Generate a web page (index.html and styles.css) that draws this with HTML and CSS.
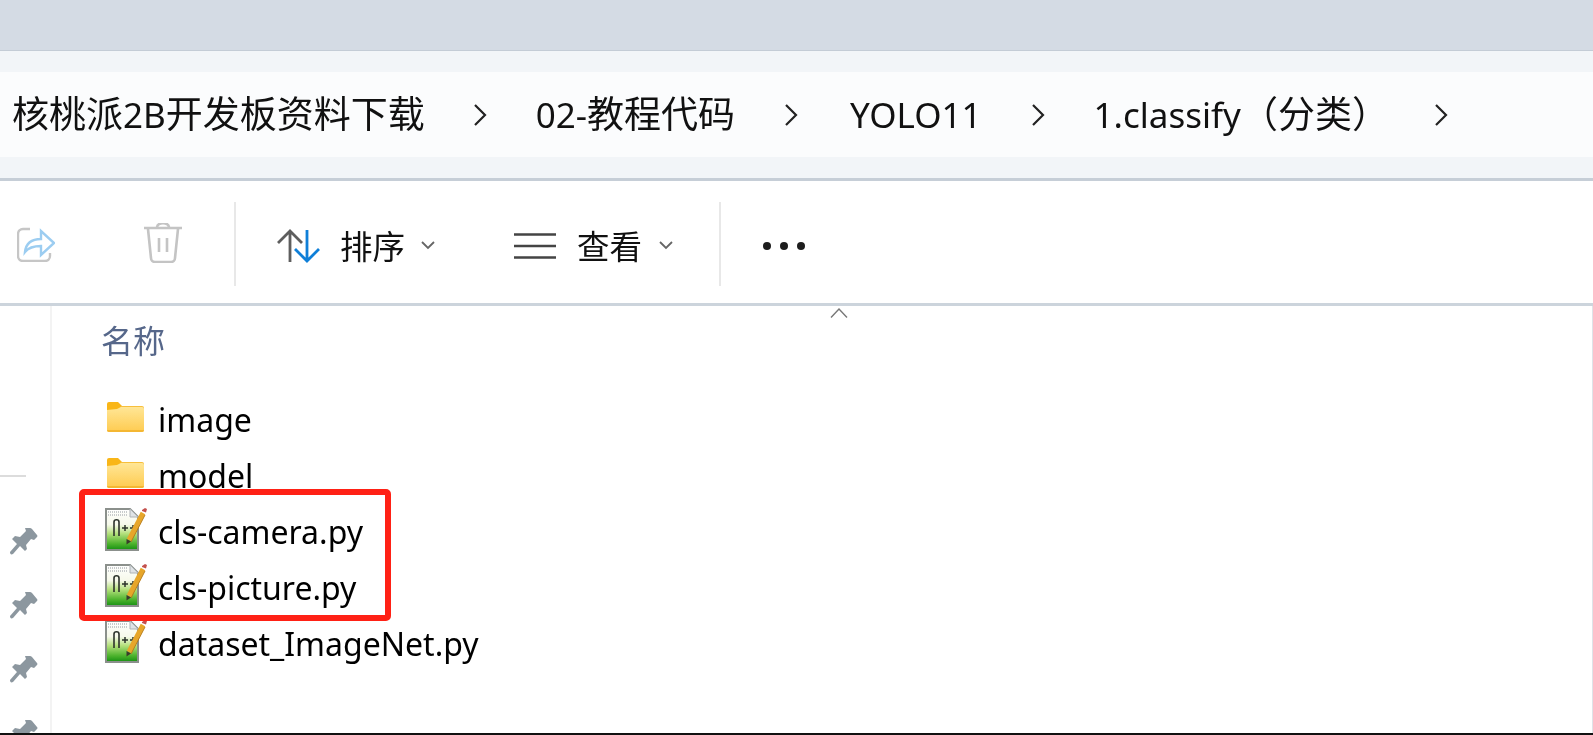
FILE: index.html
```html
<!DOCTYPE html>
<html lang="zh-CN">
<head>
<meta charset="utf-8">
<title>1.classify（分类）</title>
<link rel="stylesheet" href="styles.css">
</head>
<body>
<div class="window">
  <div class="titlebar"></div>
  <div class="address">
    <nav class="crumbs">
      <span class="crumb c1">核桃派<span class="lat">2B</span>开发板资料下载</span>
      <svg class="sep-chev" viewBox="0 0 14 22"><path d="M2 1l10 10L2 21"/></svg>
      <span class="crumb c2"><span class="lat">02-</span>教程代码</span>
      <svg class="sep-chev" viewBox="0 0 14 22"><path d="M2 1l10 10L2 21"/></svg>
      <span class="crumb c3"><span class="lat">YOLO11</span></span>
      <svg class="sep-chev" viewBox="0 0 14 22"><path d="M2 1l10 10L2 21"/></svg>
      <span class="crumb c4"><span class="lat">1.classify</span>（分类）</span>
      <svg class="sep-chev last" viewBox="0 0 14 22"><path d="M2 1l10 10L2 21"/></svg>
    </nav>
  </div>
  <div class="toolbar">
    <svg class="ic-share" viewBox="0 0 38 36">
      <path class="grey" d="M13 3H6a5 5 0 0 0-5 5v22a5 5 0 0 0 5 5h22a5 5 0 0 0 5-5v-3"/>
      <path class="blue" d="M8 26c1-9 7-13 16-13V5l13 12-13 12v-9c-7 0-12 1-16 6z"/>
    </svg>
    <svg class="ic-trash" viewBox="0 0 40 40">
      <path d="M1 5h38M14 4c1-5 11-5 12 0M5 6l3 29a4 4 0 0 0 4 4h16a4 4 0 0 0 4-4l3-29M16 15v14M24 15v14"/>
    </svg>
    <span class="divider first"></span>
    <div class="tool sort">
      <svg class="ic-sort" viewBox="0 0 43 34">
        <path class="dark" d="M13 33V2M1 14L13 2l12 12"/>
        <path class="accent" d="M30 1v31M18 20l12 12 12-12"/>
      </svg>
      <span class="tool-label">排序</span>
      <svg class="ic-down" viewBox="0 0 14 9"><path d="M1 1l6 6 6-6"/></svg>
    </div>
    <div class="tool view">
      <svg class="ic-view" viewBox="0 0 42 26">
        <path d="M0 1.500h42M0 13h42M0 24.500h42"/>
      </svg>
      <span class="tool-label">查看</span>
      <svg class="ic-down" viewBox="0 0 14 9"><path d="M1 1l6 6 6-6"/></svg>
    </div>
    <span class="divider second"></span>
    <div class="dots"><i></i><i></i><i></i></div>
  </div>
  <div class="content">
    <aside class="side">
      <hr class="side-rule">
      <svg class="pin" viewBox="0 0 28 28"><use href="#pin"/></svg>
      <svg class="pin" viewBox="0 0 28 28"><use href="#pin"/></svg>
      <svg class="pin" viewBox="0 0 28 28"><use href="#pin"/></svg>
      <svg class="pin" viewBox="0 0 28 28"><use href="#pin"/></svg>
    </aside>
    <main class="list">
      <svg class="sort-caret" viewBox="0 0 18 10"><path d="M1 9.500L9 1l8 8.500"/></svg>
      <div class="col-head">名称</div>
      <div class="row">
        <svg class="ic-folder" viewBox="0 0 37 30"><use href="#folder"/></svg>
        <span class="name">image</span>
      </div>
      <div class="row">
        <svg class="ic-folder" viewBox="0 0 37 30"><use href="#folder"/></svg>
        <span class="name">model</span>
      </div>
      <div class="row">
        <svg class="ic-npp" viewBox="0 0 42 44"><use href="#npp"/></svg>
        <span class="name">cls-camera.py</span>
      </div>
      <div class="row">
        <svg class="ic-npp" viewBox="0 0 42 44"><use href="#npp"/></svg>
        <span class="name">cls-picture.py</span>
      </div>
      <div class="row">
        <svg class="ic-npp" viewBox="0 0 42 44"><use href="#npp"/></svg>
        <span class="name">dataset_ImageNet.py</span>
      </div>
      <div class="highlight"></div>
    </main>
  </div>
</div>
<svg class="defs" aria-hidden="true">
  <defs>
    <linearGradient id="fb" x1="0" y1="0" x2="0" y2="1">
      <stop offset="0" stop-color="#ffe696"/><stop offset="1" stop-color="#fecb50"/>
    </linearGradient>
    <linearGradient id="pg" x1="0" y1="0" x2="0" y2="1">
      <stop offset="0" stop-color="#ffffff"/><stop offset=".38" stop-color="#f6f9ea"/>
      <stop offset=".6" stop-color="#b4e07c"/><stop offset=".85" stop-color="#4cb22c"/><stop offset="1" stop-color="#158f12"/>
    </linearGradient>
    <path id="pin" d="M20 1q1 0 2 1l5 6q1 1 0 2l-3 3-3-1-5 6 1 4-2 2-5-5-7 8c-2 1-3 0-3-2l7-8-5-5 3-3 5 1 6-6-1-3z"/>
    <g id="folder">
      <path fill="#f9b618" d="M0 2a2 2 0 0 1 2-2h9l4 4v6H0z"/>
      <path fill="#f7bf3c" d="M14 4h21a2 2 0 0 1 2 2v3H10z"/>
      <path fill="url(#fb)" d="M0 8l10-1 4-2h21a2 2 0 0 1 2 2v21a2 2 0 0 1-2 2H2a2 2 0 0 1-2-2z"/>
      <path fill="#f4b733" d="M0 28h37a2 2 0 0 1-2 2H2a2 2 0 0 1-2-2z"/>
    </g>
    <g id="npp">
      <path fill="url(#pg)" stroke="#8b908c" stroke-width="2" d="M1 2h24l8 8v33H1z"/>
      <path fill="#dfe3e6" stroke="#aeb3b6" d="M25 2v8h8z"/>
      <path stroke="#b6babd" stroke-width="1.500" stroke-dasharray="1 1" d="M3 5h20M3 8h20"/>
      <path fill="none" stroke="#2c332c" stroke-width="1.600" d="M9 29V15c0-3 5-3 5 0v14"/>
      <path fill="none" stroke="#2c332c" stroke-width="1.500" d="M17 21h6M20 18v6M25 21h6M28 18v6"/>
      <path fill="none" stroke="#e7a62a" stroke-width="5" d="M38 6L24 33"/>
      <path fill="none" stroke="#b97d17" stroke-width="1" d="M40 8L26 35"/>
      <path fill="#c3504d" d="M37 3l3-2 2 1-1 3.500-4-1.500z"/>
      <path fill="#3b3b2b" d="M21.500 32l4.500 2.500-4.500 3z"/>
    </g>
  </defs>
</svg>
</body>
</html>
```
FILE: styles.css
```css
* { box-sizing: border-box; }
html, body { margin: 0; padding: 0; background: #fff; }
body { width: 1593px; height: 735px; overflow: hidden; font-family: "Noto Sans", "Noto Sans CJK SC", sans-serif; }
.defs { width: 0; height: 0; position: absolute; }
.window { width: 1593px; height: 735px; display: flex; flex-direction: column; }

.titlebar { height: 51px; background: #d4dbe4; border-bottom: 1px solid #c4ccd6; flex: none; }

.address { height: 130px; flex: none; padding-top: 21px; background: #f2f5f8; border-bottom: 3px solid #c6ced7; }
.crumbs { height: 85px; background: #fbfcfd; display: flex; align-items: center; padding-left: 12px; filter: blur(.45px); }
.crumb { font-size: 37px; line-height: 46px; color: #111; white-space: nowrap; }
.lat { font-size: 35px; }
.sep-chev { width: 14px; height: 22px; flex: none; }
.sep-chev path { fill: none; stroke: #222; stroke-width: 2.200; }
.c1 { margin-right: 48px; }
.c2 { margin-left: 49px; margin-right: 49px; }
.c3 { margin-left: 52px; margin-right: 49px; }
.c4 { margin-left: 49px; margin-right: 45px; }

.toolbar { height: 125px; flex: none; display: flex; align-items: center; padding: 10px 0 3px 17px; border-bottom: 3px solid #ccd4dc; background: #fff; }
.ic-share { width: 38px; height: 36px; flex: none; margin-top: -4px; filter: blur(.45px); }
.ic-share path { fill: none; stroke-width: 2.400; }
.ic-share .grey { stroke: #c6c6c6; }
.ic-share .blue { stroke: #9ccdf1; }
.ic-trash { width: 40px; height: 40px; flex: none; margin-left: 88px; margin-top: -6px; filter: blur(.45px); }
.ic-trash path { fill: none; stroke: #c4c4c4; stroke-width: 2.600; }
.divider { width: 2px; height: 84px; background: #e8e8e8; flex: none; margin-top: -4px; }
.divider.first { margin-left: 51px; }
.divider.second { margin-left: 46px; }
.tool { display: flex; align-items: center; flex: none; filter: blur(.45px); }
.tool.sort { margin-left: 41px; }
.tool.view { margin-left: 79px; }
.tool-label { font-size: 32.500px; line-height: 40px; color: #111; margin-left: 20px; padding-top: 2px; }
.view .tool-label { margin-left: 21px; }
.ic-sort { width: 43px; height: 34px; flex: none; }
.ic-sort path { fill: none; stroke-width: 2.800; }
.ic-sort .dark { stroke: #5e5e5e; }
.ic-sort .accent { stroke: #0f7fd8; }
.ic-view { width: 42px; height: 26px; flex: none; }
.ic-view path { fill: none; stroke: #444; stroke-width: 2.600; }
.ic-down { width: 14px; height: 9px; margin-left: 16px; flex: none; }
.view .ic-down { margin-left: 17px; }
.ic-down path { fill: none; stroke: #666; stroke-width: 1.800; }
.dots { display: flex; gap: 9px; margin-left: 42px; }
.dots i { width: 8px; height: 8px; border-radius: 50%; background: #1d1d1d; display: block; }

.content { flex: 1; min-height: 0; display: flex; border-bottom: 2px solid #111; }
.side { width: 52px; flex: none; border-right: 2px solid #f3f3f3; display: flex; flex-direction: column; align-items: flex-start; overflow: hidden; padding-top: 169px; }
.side-rule { width: 26px; height: 2px; border: 0; background: #dcdcdc; margin: 0 0 50px; flex: none; }
.pin { width: 28px; height: 28px; margin: 0 0 36px 10px; flex: none; filter: blur(.4px); }
.pin use { fill: #8c979f; }

.list { flex: 1; position: relative; border-right: 1px solid #dfe3e8; padding-left: 53px; }
.sort-caret { position: absolute; left: 778px; top: 2px; width: 18px; height: 10px; }
.sort-caret path { fill: none; stroke: #777; stroke-width: 1.400; }
.col-head { font-size: 32px; line-height: 40px; color: #56678a; padding-top: 15px; height: 86px; margin-left: -4px; filter: blur(.4px); }
.row { height: 56px; display: flex; align-items: center; filter: blur(.35px); }
.name { font-size: 32px; line-height: 40px; color: #000; white-space: nowrap; margin-left: 1px; }
.ic-folder { width: 37px; height: 30px; flex: none; margin: -6px 13px 0 2px; }
.ic-npp { width: 42px; height: 44px; flex: none; margin: -6px 10px 0 0; }
.highlight { position: absolute; left: 27px; top: 183px; width: 312px; height: 132px; border: 6px solid #ff2115; border-radius: 5px; }
```
